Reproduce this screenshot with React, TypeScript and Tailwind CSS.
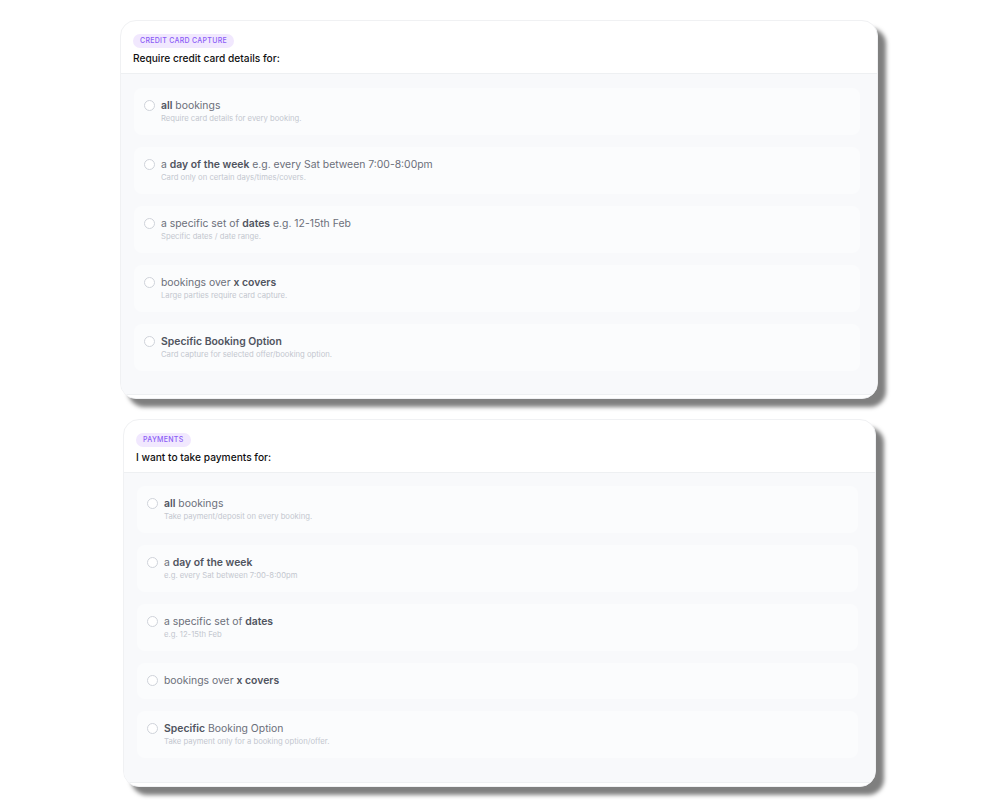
import React from "react";

type Item = { title: React.ReactNode; sub?: string };

function Radio() {
  return <span className="mt-[1px] h-[11px] w-[11px] shrink-0 rounded-full border border-[#cfd3da] bg-white" />;
}

function B({ children }: { children: React.ReactNode }) {
  return <span className="font-semibold text-[#50545f]">{children}</span>;
}

function Row({ item }: { item: Item }) {
  return (
    <div className="flex items-start gap-[6px] rounded-[8px] bg-[#fbfcfd] px-[10px] py-[11px]">
      <Radio />
      <div className="flex flex-col">
        <div className="text-[10.4px] leading-[14px] text-[#6b6f7a]">{item.title}</div>
        {item.sub && <div className="text-[7.7px] leading-[11px] text-[#c3c7cf]">{item.sub}</div>}
      </div>
    </div>
  );
}

function Card({ badge, title, items, className, pt, pb }: { badge: string; title: string; items: Item[]; className: string; pt: string; pb: string }) {
  return (
    <div className={"flex flex-col overflow-hidden rounded-[16px] border border-[#f0f1f3] bg-white shadow-[8px_8px_4px_rgba(0,0,0,0.5)] " + className}>
      <div className="flex flex-col items-start gap-[3px] border-b border-[#eef0f2] px-[12px] pb-[8px] pt-[13px]">
        <span className="rounded-full bg-[#f1e8fe] px-[7px] py-[3px] text-[7px] font-medium uppercase leading-[8px] tracking-[0.04em] text-[#8b5cf6]">{badge}</span>
        <span className="text-[10.2px] font-medium leading-[14px] text-[#111]">{title}</span>
      </div>
      <div className={"flex flex-col gap-[12px] border-b border-[#eef0f2] bg-[#f8f9fb] pl-[13px] pr-[17px] " + pt + " " + pb}>
        {items.map((it, i) => (
          <Row key={i} item={it} />
        ))}
      </div>
      <div className="h-[3px] bg-white" />
    </div>
  );
}

export default function App() {
  const a: Item[] = [
    { title: <><B>all</B> bookings</>, sub: "Require card details for every booking." },
    { title: <>a <B>day of the week</B> e.g. every Sat between 7:00-8:00pm</>, sub: "Card only on certain days/times/covers." },
    { title: <>a specific set of <B>dates</B> e.g. 12-15th Feb</>, sub: "Specific dates / date range." },
    { title: <>bookings over <B>x covers</B></>, sub: "Large parties require card capture." },
    { title: <B>Specific Booking Option</B>, sub: "Card capture for selected offer/booking option." },
  ];
  const b: Item[] = [
    { title: <><B>all</B> bookings</>, sub: "Take payment/deposit on every booking." },
    { title: <>a <B>day of the week</B></>, sub: "e.g. every Sat between 7:00-8:00pm" },
    { title: <>a specific set of <B>dates</B></>, sub: "e.g. 12-15th Feb" },
    { title: <>bookings over <B>x covers</B></> },
    { title: <><B>Specific</B> Booking Option</>, sub: "Take payment only for a booking option/offer." },
  ];
  return (
    <div className="min-h-[800px] w-[1000px] bg-white pt-[20px]" style={{ fontFamily: "Inter, 'Noto Sans', sans-serif" }}>
      <Card badge="Credit card capture" title="Require credit card details for:" items={a} className="ml-[120px] w-[758px]" pt="pt-[14px]" pb="pb-[23px]" />
      <Card badge="Payments" title="I want to take payments for:" items={b} className="ml-[123px] mt-[20px] w-[753px]" pt="pt-[13px]" pb="pb-[24px]" />
    </div>
  );
}
